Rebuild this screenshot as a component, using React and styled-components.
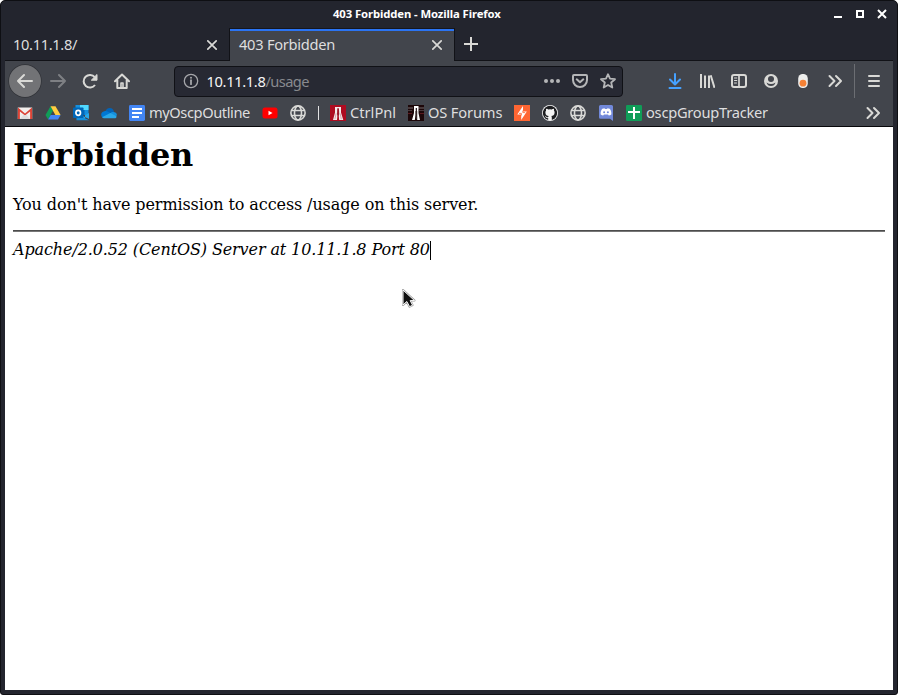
import React from "react";
import styled, { createGlobalStyle } from "styled-components";

const GlobalStyle = createGlobalStyle`
  * { box-sizing: border-box; }
  body { margin: 0; background: #fff; overflow: hidden; }
  svg { display: block; flex: none; }
`;

const Window = styled.div`
  position: relative;
  width: 898px;
  height: 695px;
  display: flex;
  flex-direction: column;
  padding: 0 4px 4px 4px;
  background: #23252e;
  border: 1px solid #0e0f13;
  border-radius: 5px 5px 3px 3px;
  overflow: hidden;
  font-family: "Noto Sans", sans-serif;
`;

const TitleBar = styled.header`
  height: 27px;
  flex: none;
  display: grid;
  grid-template-columns: 1fr auto;
  align-items: center;
  padding-right: 5px;
`;

const WindowTitle = styled.div`
  padding: 0 0 2px 328px;
  font-size: 11.3px;
  font-weight: 700;
  letter-spacing: -0.1px;
  line-height: 20px;
  color: #fff;
  white-space: nowrap;
`;

const WindowControls = styled.div`
  display: flex;
  gap: 10px;
  padding-bottom: 1px;
`;

const TabStrip = styled.nav`
  height: 33px;
  flex: none;
  display: flex;
  border-bottom: 1px solid #111217;
`;

const Tab = styled.div`
  width: ${(p) => (p.$active ? 226 : 224)}px;
  height: ${(p) => (p.$active ? 33 : 32)}px;
  display: flex;
  align-items: center;
  justify-content: space-between;
  padding: ${(p) => (p.$active ? "0 9px 0 9px" : "1px 9px 0 8px")};
  background: ${(p) => (p.$active ? "#42454c" : "transparent")};
  border: solid #111217;
  border-width: ${(p) => (p.$active ? "0 1px" : "0")};
  box-shadow: ${(p) => (p.$active ? "inset 0 1px #15171e, inset 0 3px #2b74f3" : "none")};
`;

const Label = styled.span`
  width: ${(p) => (p.$width ? p.$width + "px" : "auto")};
  font-size: 14.67px;
  line-height: 20px;
  letter-spacing: ${(p) => p.$spacing || 0}px;
  color: ${(p) => p.$color || "#dededf"};
  white-space: nowrap;
`;

const TabLabel = styled(Label)`
  padding-bottom: 2px;
`;

const NewTab = styled.div`
  width: 32px;
  display: grid;
  place-items: center;
`;

const NavBar = styled.div`
  height: 40px;
  flex: none;
  display: flex;
  align-items: center;
  padding-left: 4px;
  background: #42454c;
`;

const ToolButton = styled.div`
  width: 32px;
  height: 32px;
  flex: none;
  display: grid;
  place-items: center;
  margin-right: ${(p) => (p.$round ? 1 : 0)}px;
  border-radius: 50%;
  background: ${(p) => (p.$round ? "#727376" : "transparent")};
  box-shadow: ${(p) => (p.$round ? "0 0 0 0.7px #303237" : "none")};
`;

const AddressBar = styled.div`
  width: 449px;
  height: 31px;
  flex: none;
  margin: 0 36px;
  padding: 0 6px 0 8px;
  display: flex;
  align-items: center;
  background: #272933;
  border: 1px solid #101116;
  border-radius: 4px;
`;

const AddressText = styled.div`
  flex: 1;
  padding: 0 0 1px 7.5px;
  white-space: nowrap;
`;

const AddressActions = styled.div`
  display: flex;
  gap: 12px;
`;

const MenuDivider = styled.div`
  width: 1px;
  height: 34px;
  margin: 0 3px;
  background: #6c6e73;
`;

const BookmarksBar = styled.div`
  height: 26px;
  flex: none;
  display: flex;
  gap: 12px;
  align-items: center;
  padding: 0 12px 1px;
  background: #42454c;
  border-bottom: 1px solid #08080b;
`;

const Bookmark = styled.div`
  display: flex;
  gap: 4px;
  align-items: center;

  ${Label} {
    padding-bottom: 2px;
  }
`;

const BookmarkDivider = styled.div`
  width: 1px;
  height: 14px;
  margin-right: -1px;
  background: #e2e2e3;
`;

const Overflow = styled.div`
  margin-left: auto;
`;

const Page = styled.main`
  flex: 1;
  padding: 9px 8px 8px;
  background: #fff;
  color: #000;
  font-family: "DejaVu Serif", serif;
  font-size: 16px;
`;

const Heading = styled.h1`
  margin: 0 0 21px;
  font-size: 32px;
  line-height: 38px;
  letter-spacing: -0.22px;
`;

const Message = styled.p`
  margin: 0 0 15px;
  line-height: 20px;
  letter-spacing: -0.095px;
`;

const Rule = styled.hr`
  height: 2px;
  margin: 0 0 8px;
  border: 0;
  border-top: 1px solid #4c4c4c;
  border-bottom: 1px solid #777;
`;

const Signature = styled.address`
  display: flex;
  align-items: center;
  line-height: 20px;
  letter-spacing: -0.115px;
`;

const Caret = styled.span`
  width: 1px;
  height: 19px;
  background: #000;
`;

const Pointer = styled.svg`
  position: absolute;
  left: 400px;
  top: 287px;
`;

const Glyph = ({ children, color = "#d9d9d6", size = 16, sw = 2, cap = "round" }) => (
  <svg width={size} height={size} viewBox={`0 0 ${size} ${size}`} fill="none" stroke={color} strokeWidth={sw} strokeLinecap={cap} strokeLinejoin="round">
    {children}
  </svg>
);

const Close = () => <Glyph sw={1.7}><path d="M3.8 3.8l8.4 8.4M12.2 3.8l-8.4 8.4" /></Glyph>;
const Chevrons = () => <Glyph><path d="M2.5 3l5 5-5 5M9 3l5 5-5 5" /></Glyph>;
const Globe = () => (
  <Glyph sw={1.6}>
    <circle cx="8" cy="8" r="7.1" />
    <ellipse cx="8" cy="8" rx="3.5" ry="7" />
    <path d="M1.7 5.5h12.6M1.7 10.5h12.6" />
  </Glyph>
);

const Gmail = () => (
  <Glyph sw={0}>
    <path d="M.8 2.5h14.4v11.5H.8z" fill="#f1eeec" />
    <path d="M1 2.5L8 8.5l7-6L15.2 14h-2.1V6.5L8 10.4 2.9 6.5V14H.8z" fill="#dc4437" />
    <path d="M3 14l3.6-4.3L8 10.8l1.4-1.1L13 14z" fill="#dedddd" />
  </Glyph>
);
const Drive = () => (
  <Glyph sw={0}>
    <path d="M5.5 1.2L.5 10l2.6 4.4L8 5.6z" fill="#109d58" />
    <path d="M5.5 1.2h5L15.6 10h-5.2z" fill="#ffcd40" />
    <path d="M5.7 10h9.9L13 14.4H3.1z" fill="#4385f5" />
  </Glyph>
);
const Outlook = () => (
  <Glyph sw={0}>
    <path d="M2.5 0h13v10h-13z" fill="#1490df" />
    <path d="M7 0h8.5v5H7z" fill="#50d9ff" />
    <path d="M7 5h4.5v5H7z" fill="#0364b8" />
    <path d="M4 8l12 6V8l-4 2.2V15H4z" fill="#28a8ea" />
    <path d="M3.5 9l12.5 6.3H3.5z" fill="#1490df" />
    <rect y="2.5" width="10.5" height="10.5" rx=".8" fill="#0067b8" />
    <ellipse cx="5.2" cy="7.8" rx="2.3" ry="2.5" stroke="#fff" strokeWidth="1.7" />
  </Glyph>
);
const OneDrive = () => (
  <Glyph sw={0}>
    <path d="M4.2 6.5C6.2 1.6 12.5 2.2 13 7L8 11 2 9z" fill="#0364b8" />
    <path d="M3.4 6.2c2.2-.7 4.2.8 6.5 2.3L3.5 13C-1 13-.8 6.5 3.4 6.2z" fill="#0078d4" />
    <path d="M9.3 8.2C11 6.5 15.8 6.3 16 10.5L13 11.5l-5-1z" fill="#1490df" />
    <path d="M9.3 8l6.2 3.2c.2 1.3-.6 2.1-2 2.1h-10c-1 0-1.9-.5-2.4-1.1z" fill="#28a8ea" />
  </Glyph>
);
const Docs = () => (
  <Glyph sw={0}>
    <rect width="16" height="16" rx="1.4" fill="#4285f4" />
    <path d="M3 3h10v2H3zM3 7h10v2H3zM3 11h7v2H3z" fill="#fff" />
  </Glyph>
);
const YouTube = () => (
  <Glyph sw={0}>
    <rect x=".5" y="2.5" width="15" height="11" rx="2.5" fill="#f00" />
    <path d="M6.5 5.8l4 2.2-4 2.2z" fill="#fff" />
  </Glyph>
);
const ControlPanel = () => (
  <Glyph sw={0}>
    <path d="M0 0h16v16H0z" fill="#ae0c21" />
    <path d="M5 2h6v5.5L13.3 15H9.2l-.4-3.8H7.4L7 15H3l2-7.5z" fill="#f5e9ea" />
    <path d="M7.3 3.3h1.6l.3 5.5-.5 3H7.5L7 9z" fill="#9d1628" />
    <path d="M6 8.8L5 13.8M10.2 8.8l1 5" stroke="#b8606c" strokeWidth=".5" />
  </Glyph>
);
const Forums = () => (
  <Glyph sw={0}>
    <path d="M0 0h16v16H0z" fill="#1c0709" />
    <path d="M0 2h5v2H0zM10 2h6v2h-6zM0 5h4v1H0zM11 5h5v1h-5z" fill="#49393b" />
    <path d="M0 8h4v1H0zM12 8h4v1h-4z" fill="#5c191e" />
    <path d="M6 1h4.5v7l1.5 7H9.2V6H7.5v4L6.8 15H4l2-7z" fill="#fff" />
    <path d="M7.7 3H9v11H7.8z" fill="#342527" />
  </Glyph>
);
const Burp = () => (
  <Glyph sw={0}>
    <path d="M0 0h16v16H0z" fill="#ff6633" />
    <path d="M9 1v5.5h3.8L10.5 10 7.2 15V9.5H3.3l2.3-3.6z" fill="#fff" />
    <path d="M8.8 6v1.6h2M7.4 10V8.4h-2" stroke="#ff6633" strokeWidth=".8" />
  </Glyph>
);
const GitHub = () => (
  <Glyph sw={0}>
    <circle cx="8" cy="8" r="8" fill="#f4f4f4" />
    <path fill="#1c1d20" fillRule="evenodd" d="M8 .8a7.2 7.2 0 0 0-2.3 14c.4.1.5-.2.5-.4v-1.3c-2 .4-2.4-.9-2.4-.9-.4-.8-.8-1-.8-1-.7-.5 0-.5 0-.5.7.1 1.1.8 1.1.8.7 1.1 1.7.8 2.1.6 0-.5.3-.8.5-1-1.6-.2-3.3-.8-3.3-3.6 0-.8.3-1.4.7-1.9 0-.2-.3-.9.1-1.9 0 0 .6-.2 2 .7a7 7 0 0 1 3.6 0c1.4-.9 2-.7 2-.7.4 1 .1 1.7.1 1.9.5.5.7 1.1.7 1.9 0 2.8-1.7 3.4-3.3 3.6.3.2.5.7.5 1.4v1.9c0 .2.1.5.5.4A7.2 7.2 0 0 0 8 .8z" />
  </Glyph>
);
const Discord = () => (
  <Glyph sw={0}>
    <path d="M1 1.5Q1 0 2.5 0h11Q15 0 15 1.5V16l-3-2.3H2.5Q1 13.7 1 12.2z" fill="#7289da" />
    <path d="M4.3 3.8l2.2-.5.5.7h2l.5-.7 2.2.5c1.4 1.6 1.9 3.6 1.6 5.7-.9.7-1.7 1-2.5 1.1l-.8-1H6l-.8 1c-.8-.1-1.6-.4-2.5-1.1-.3-2.1.2-4.1 1.6-5.7z" fill="#fff" />
    <circle cx="6.1" cy="7.2" r="1" fill="#7289da" /><circle cx="9.9" cy="7.2" r="1" fill="#7289da" />
  </Glyph>
);
const Sheets = () => (
  <Glyph sw={0}>
    <rect width="16" height="16" rx="1.2" fill="#0f9d58" />
    <path d="M7 2h2v4h5v2H9v6H7V8H2V6h5z" fill="#fff" />
  </Glyph>
);

export default function App() {
  return (
    <>
      <GlobalStyle />
      <Window>
        <TitleBar>
          <WindowTitle>403 Forbidden - Mozilla Firefox</WindowTitle>
          <WindowControls>
            <Glyph size={12} sw={2} color="#fff" cap="butt"><path d="M2 9h8" /></Glyph>
            <Glyph size={12} sw={0}><path d="M2 2h8v8H2zM4 4v4h4V4z" fill="#fff" fillRule="evenodd" /></Glyph>
            <Glyph size={12} sw={2} color="#fff" cap="butt"><path d="M2 2l8 8M10 2l-8 8" /></Glyph>
          </WindowControls>
        </TitleBar>
        <TabStrip>
          <Tab><TabLabel $spacing={-0.35}>10.11.1.8/</TabLabel><Close /></Tab>
          <Tab $active><TabLabel $spacing={-0.27}>403 Forbidden</TabLabel><Close /></Tab>
          <NewTab><Glyph cap="butt"><path d="M8 1v14M1 8h14" /></Glyph></NewTab>
        </TabStrip>
        <NavBar>
          <ToolButton $round><Glyph><path d="M1 8h14M7 2L1 8l6 6" /></Glyph></ToolButton>
          <ToolButton><Glyph color="#7e8084"><path d="M1 8h14M9 2l6 6-6 6" /></Glyph></ToolButton>
          <ToolButton><Glyph cap="butt"><path d="M13 12A6.3 6.3 0 1 1 12.8 4.2" /><path d="M15 1.5v5.7H9.3z" fill="#d9d9d6" strokeWidth="1" /></Glyph></ToolButton>
          <ToolButton><Glyph><path d="M1 8.3L8 1.5l7 6.8M3.3 7v8h9.4V7" /><path d="M7 14v-4h2v4" strokeWidth="1.6" /></Glyph></ToolButton>
          <AddressBar>
            <Glyph color="#a5a6aa" sw={1.3}><circle cx="8" cy="8" r="6.7" /><path d="M8 7.2v4" strokeWidth="1.8" /><path d="M8 4.7v.1" strokeWidth="2" /></Glyph>
            <AddressText><Label $spacing={-0.35} $color="#f5f5f6">10.11.1.8</Label><Label $spacing={-0.6} $color="#88898e">/usage</Label></AddressText>
            <AddressActions>
              <Glyph sw={0}><g fill="#b4b5b7"><circle cx="2" cy="8" r="2" /><circle cx="8" cy="8" r="2" /><circle cx="14" cy="8" r="2" /></g></Glyph>
              <Glyph color="#b4b5b7"><path d="M2 2h12q1 0 1 1v4a7 7 0 0 1-14 0V3q0-1 1-1z" /><path d="M4.7 6.3L8 9.3l3.3-3" /></Glyph>
              <Glyph color="#b4b5b7" sw={1.8}><path d="M8 1.2l2 4.5 5 .5-3.8 3.3 1.1 5L8 12l-4.3 2.5 1.1-5L1 6.2l5-.5z" /></Glyph>
            </AddressActions>
          </AddressBar>
          <ToolButton><Glyph color="#45a1ff"><path d="M8 1v10M3 6.5l5 5 5-5M2.5 15h11" /></Glyph></ToolButton>
          <ToolButton><Glyph cap="butt"><path d="M2 1v14M6 2.5V15M10 2.5V15M11.7 2.2l3.8 12.6" /></Glyph></ToolButton>
          <ToolButton><Glyph><rect x="1" y="2" width="14" height="12" rx="2" /><path d="M8 2v12" strokeWidth="1.7" /><path d="M3.5 5h2.3M3.5 7.5h2.3M3.5 10h2" strokeWidth="1" /></Glyph></ToolButton>
          <ToolButton><Glyph sw={0}><circle cx="8" cy="8" r="7" fill="#d9d9d6" /><path d="M8 3a3 3 0 1 1 0 6 3 3 0 0 1 0-6z" fill="#42454c" /><path d="M3.5 9.5Q8 12.5 12.5 9.5 11.5 13 8 13T3.5 9.5z" fill="#42454c" /></Glyph></ToolButton>
          <ToolButton><Glyph sw={0}><rect x="3.2" y="1" width="9.6" height="14" rx="4.4" fill="#eeeeed" /><circle cx="8" cy="10.2" r="3.4" fill="#f58135" /></Glyph></ToolButton>
          <ToolButton><Chevrons /></ToolButton>
          <MenuDivider />
          <ToolButton><Glyph><path d="M3 3h10M3 8h10M3 13h10" /></Glyph></ToolButton>
        </NavBar>
        <BookmarksBar>
          <Gmail /><Drive /><Outlook /><OneDrive />
          <Bookmark><Docs /><Label $width={101} $spacing={-0.42}>myOscpOutline</Label></Bookmark>
          <YouTube /><Globe /><BookmarkDivider />
          <Bookmark><ControlPanel /><Label $width={46}>CtrlPnl</Label></Bookmark>
          <Bookmark><Forums /><Label $width={74} $spacing={-0.15}>OS Forums</Label></Bookmark>
          <Burp /><GitHub /><Globe /><Discord />
          <Bookmark><Sheets /><Label $width={122} $spacing={-0.25}>oscpGroupTracker</Label></Bookmark>
          <Overflow><Chevrons /></Overflow>
        </BookmarksBar>
        <Page>
          <Heading>Forbidden</Heading>
          <Message>You don't have permission to access /usage on this server.</Message>
          <Rule />
          <Signature>Apache/2.0.52 (CentOS) Server at 10.11.1.8 Port 80<Caret /></Signature>
        </Page>
        <Pointer width="16" height="22" viewBox="0 0 16 22">
          <path d="M2 2v15l3.8-3.5 2.8 5.2 3-1.5-2.4-4.6h4.3z" fill="#111" stroke="#999" strokeWidth="2" strokeLinejoin="round" />
          <path d="M2 2v15l3.8-3.5 2.8 5.2 3-1.5-2.4-4.6h4.3z" fill="#111" stroke="#fff" strokeWidth="1" />
        </Pointer>
      </Window>
    </>
  );
}
